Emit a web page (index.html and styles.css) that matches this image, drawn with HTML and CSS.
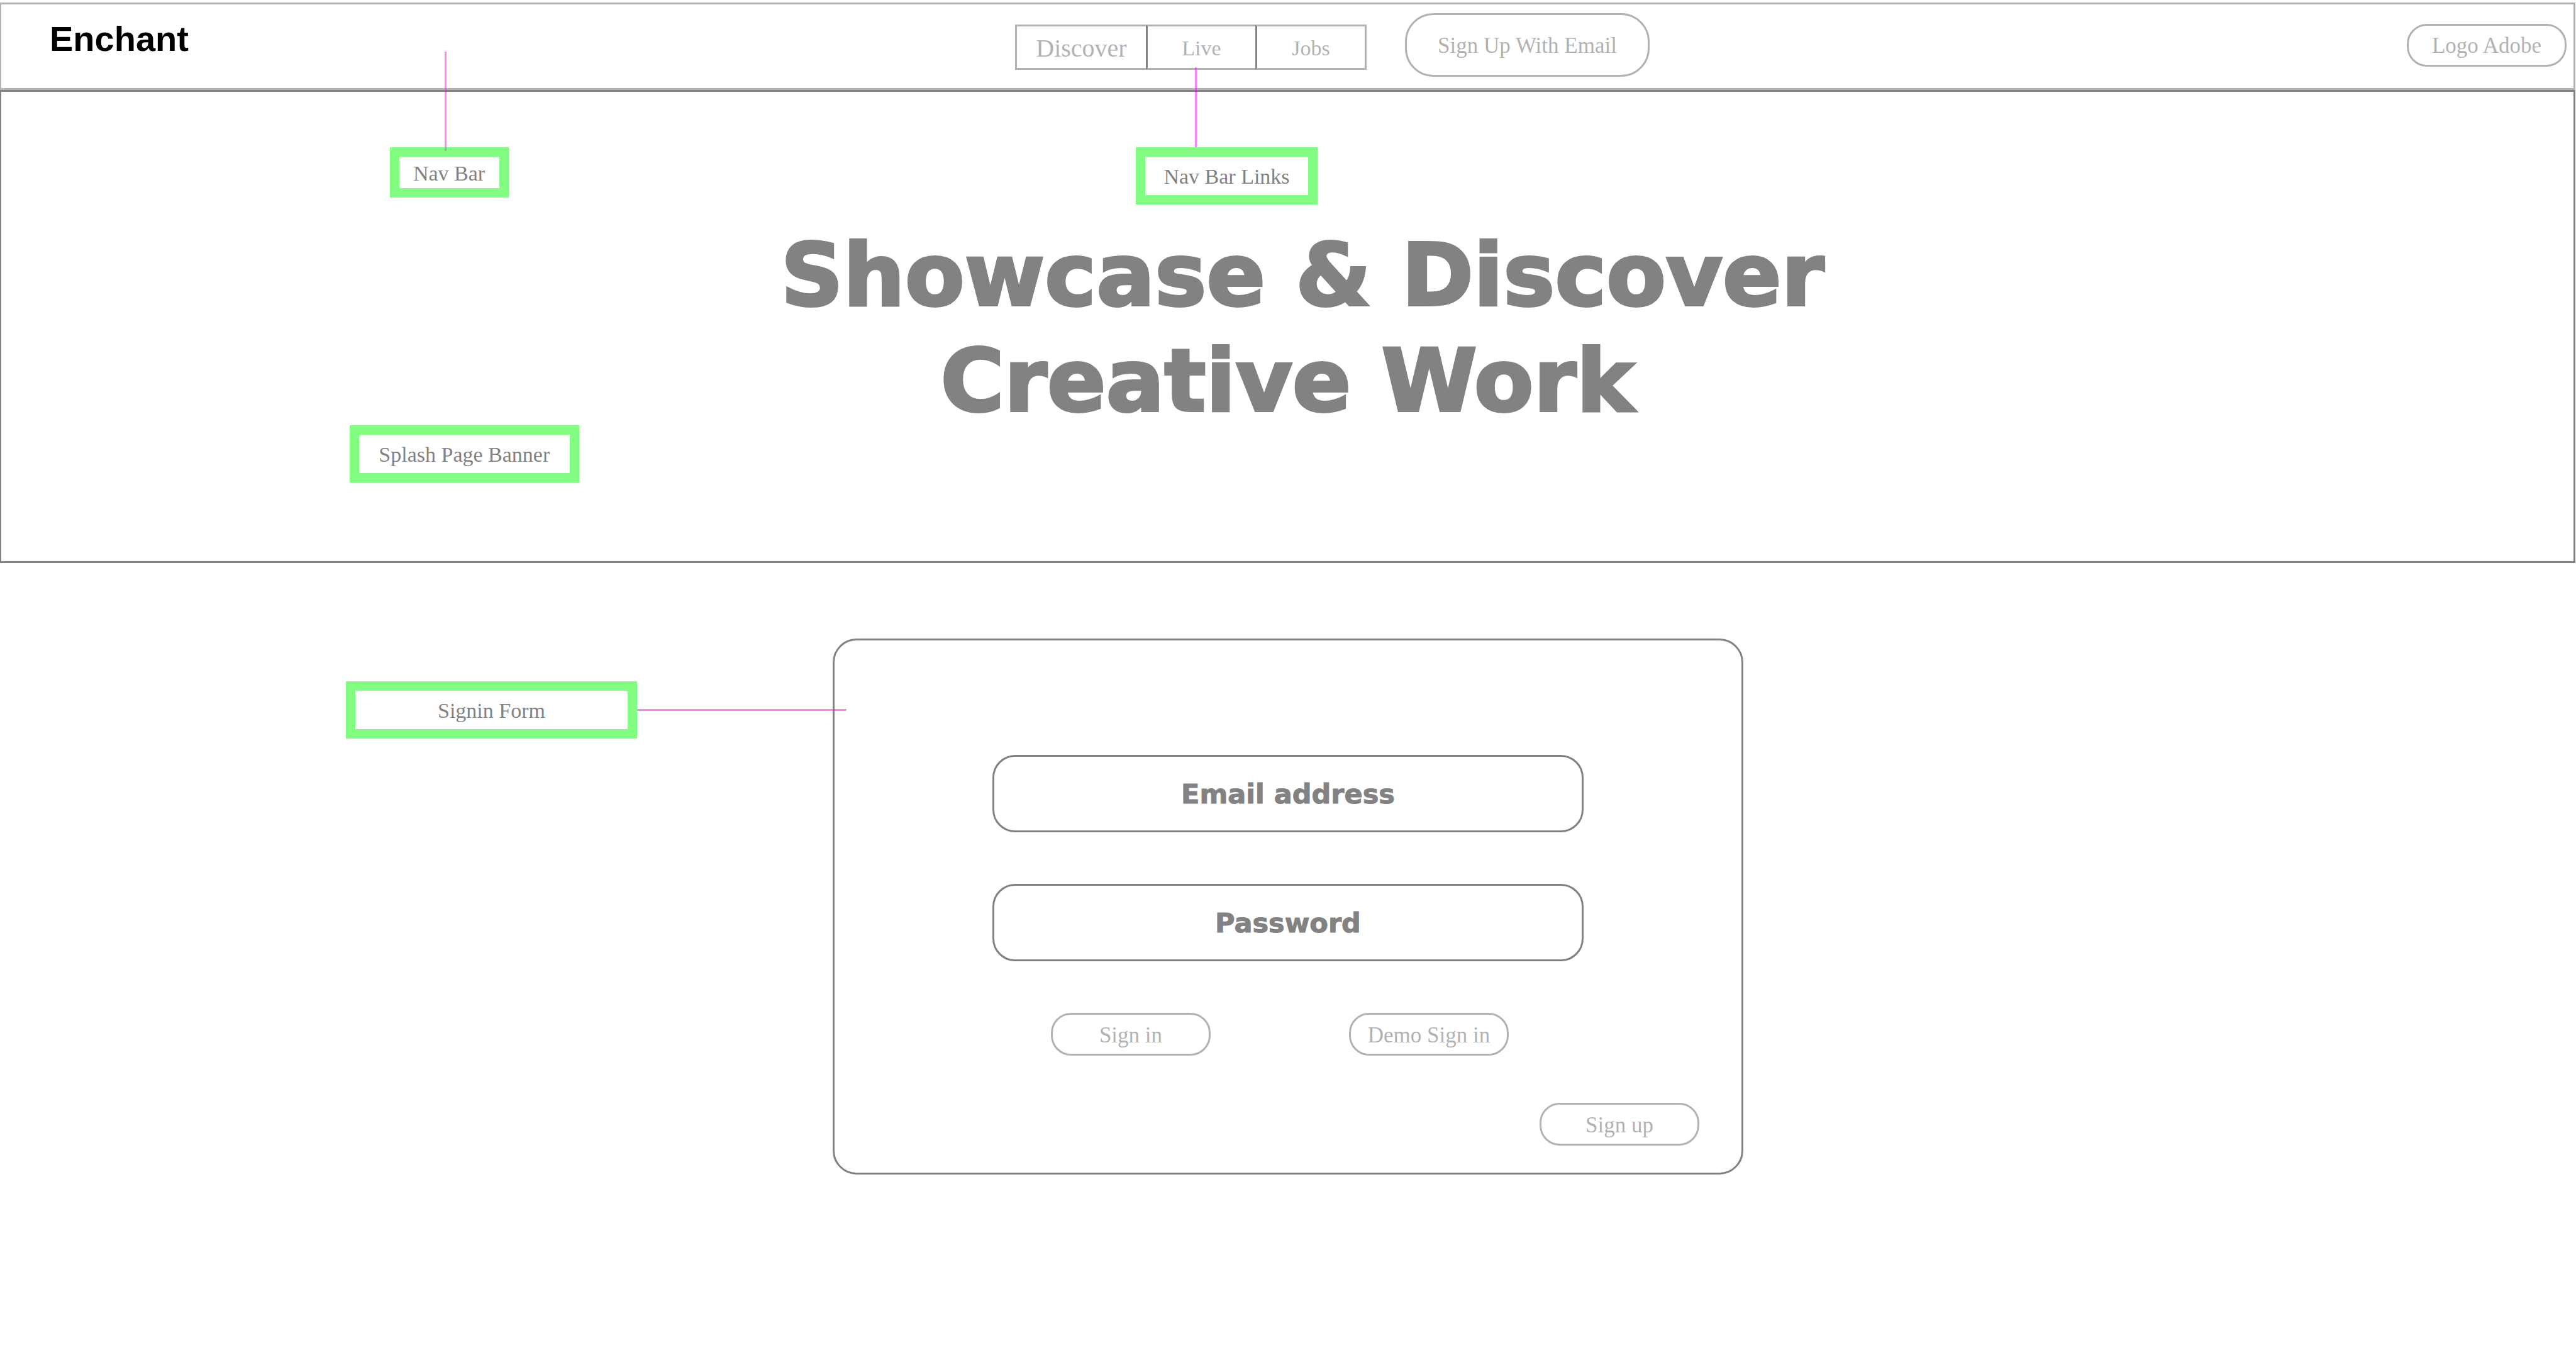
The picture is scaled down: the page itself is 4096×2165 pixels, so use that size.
FILE: index.html
```html
<!DOCTYPE html>
<html lang="en">
<head>
  <meta charset="utf-8">
  <meta name="viewport" content="width=device-width, initial-scale=1">
  <title>Enchant</title>
  <link rel="stylesheet" href="styles.css">
</head>
<body>
  <header class="header">
    <a class="brand" href="#">Enchant</a>
    <div class="header-center">
      <nav class="nav">
        <a class="nav-link nav-link-main" href="#">Discover</a>
        <a class="nav-link" href="#">Live</a>
        <a class="nav-link" href="#">Jobs</a>
        <div class="note note-links">
          <span class="note-line-v"></span>
          <span class="note-box note-box-tall">Nav Bar Links</span>
        </div>
      </nav>
      <button class="pill pill-large" type="button">Sign Up With Email</button>
    </div>
    <a class="pill logo" href="#">Logo Adobe</a>
    <div class="note note-header">
      <span class="note-line-v"></span>
      <span class="note-box">Nav Bar</span>
    </div>
  </header>

  <section class="hero">
    <h1 class="hero-title">&nbsp;Showcase &amp; Discover<br>Creative Work</h1>
    <div class="note note-hero">
      <span class="note-box note-box-tall">Splash Page Banner</span>
    </div>
  </section>

  <main class="main">
    <form class="card">
      <div class="note note-form">
        <span class="note-box note-box-tall">Signin Form</span>
        <span class="note-line-h"></span>
      </div>
      <input class="field" type="email" placeholder="Email address" aria-label="Email address">
      <input class="field" type="password" placeholder="Password" aria-label="Password">
      <div class="actions">
        <button class="pill" type="button">Sign in</button>
        <button class="pill" type="button">Demo Sign in</button>
      </div>
      <button class="pill sign-up" type="button">Sign up</button>
    </form>
  </main>
</body>
</html>
```

FILE: styles.css
```css
:root {
  --dark: #828282;
  --light: #b2b2b2;
  --green: rgba(0, 255, 0, 0.49);
  --magenta: rgba(255, 0, 255, 0.49);
  --serif: "Liberation Serif", "Times New Roman", serif;
  --heavy: "Arial Black", "DejaVu Sans", sans-serif;
}

* {
  box-sizing: border-box;
}

body {
  margin: 0;
  background: #fff;
  font-family: var(--serif);
  font-size: 34px;
  line-height: 40px;
}

a {
  color: inherit;
  text-decoration: none;
}

/* Header */
.header {
  position: relative;
  z-index: 1;
  display: grid;
  grid-template-columns: minmax(0, 1612fr) auto minmax(0, 1469fr);
  margin: 4px 1px 0 0;
  padding: 14px 0 18px;
  border: 3px solid var(--light);
  border-left-width: 2px;
}

.brand {
  align-self: start;
  justify-self: start;
  padding: 11px 0 0 77px;
  font: bold 56px/60px "Liberation Sans", Arial, sans-serif;
  color: #000;
}

.header-center {
  display: flex;
  align-items: flex-end;
  gap: 61px;
}

.nav {
  position: relative;
  display: grid;
  grid-template-columns: 208px 174px 177px;
  height: 72px;
  margin-bottom: 11px;
}

.nav-link {
  display: flex;
  align-items: center;
  justify-content: center;
  padding-top: 3px;
  border: 3px solid var(--light);
  border-left-color: var(--dark);
  border-right: 0;
  color: var(--light);
}

.nav-link-main {
  border-left-color: var(--light);
  font-size: 40px;
}

.nav-link:nth-child(3) {
  border-right: 3px solid var(--light);
}

.pill {
  display: flex;
  align-items: center;
  justify-content: center;
  width: 254px;
  height: 68px;
  padding: 3px 0 0;
  border: 3px solid var(--light);
  border-radius: 32px;
  background: transparent;
  font: 35px/40px var(--serif);
  color: var(--light);
}

.pill-large {
  width: 389px;
  height: 101px;
  border-radius: 45px;
}

.logo {
  align-self: center;
  justify-self: end;
  margin-right: 11px;
}

/* Hero */
.hero {
  position: relative;
  margin-right: 1px;
  padding: 208px 0 202px;
  border: 3px solid var(--dark);
  border-left-width: 2px;
}

.hero-title {
  margin: 0;
  font: 900 138px/168px var(--heavy);
  text-align: center;
  color: var(--dark);
  -webkit-text-stroke: 4px var(--dark);
}

/* Sign-in form */
.main {
  padding: 120px 24px;
}

.card {
  position: relative;
  display: flex;
  flex-direction: column;
  align-items: center;
  max-width: 1448px;
  margin: 0 auto;
  padding: 182px 67px 43px;
  border: 3px solid var(--dark);
  border-radius: 38px;
}

.field {
  width: 100%;
  max-width: 940px;
  height: 123px;
  margin-bottom: 82px;
  padding: 0 32px;
  border: 3px solid var(--dark);
  border-radius: 36px;
  background: transparent;
  font: 900 43px/52px var(--heavy);
  text-align: center;
  color: var(--dark);
  -webkit-text-stroke: 1px var(--dark);
}

.field::placeholder {
  color: var(--dark);
  opacity: 1;
}

.actions {
  display: flex;
  justify-content: space-between;
  width: 100%;
  max-width: 940px;
  margin-bottom: 75px;
  padding: 0 119px 0 93px;
}

.sign-up {
  align-self: flex-end;
}

/* Notes laid over the page */
.note {
  position: absolute;
  display: flex;
  flex-direction: column;
}

.note-box {
  display: flex;
  align-items: center;
  justify-content: center;
  height: 80px;
  padding-top: 3px;
  border: 15px solid var(--green);
  color: var(--dark);
}

.note-box-tall {
  height: 91px;
}

.note-line-v {
  width: 3px;
  background: var(--magenta);
}

.note-line-h {
  flex: 1;
  height: 3px;
  background: var(--magenta);
}

.note-header {
  top: 75px;
  left: 15.1%;
  width: 189px;
}

.note-header .note-line-v {
  height: 158px;
  margin: 0 0 -6px 87px;
}

.note-links {
  top: 68px;
  left: 192px;
  width: 289px;
}

.note-links .note-line-v {
  height: 127px;
  margin-left: 94px;
}

.note-hero {
  top: 530px;
  left: 13.54%;
  width: 365px;
}

.note-form {
  top: 65px;
  left: -777px;
  flex-direction: row;
  align-items: center;
  width: 796px;
}

.note-form .note-box {
  width: 463px;
}
```
